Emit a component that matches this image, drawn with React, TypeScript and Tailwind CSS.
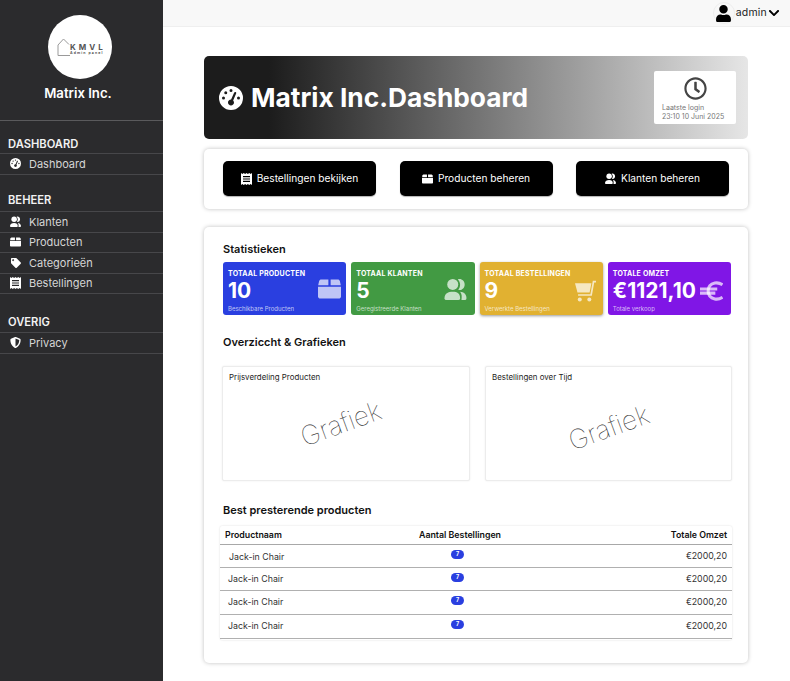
import React from "react";
import { FaTag, FaShieldAlt, FaRegClock, FaUser, FaChevronDown } from "react-icons/fa";
import { FaGaugeHigh } from "react-icons/fa6";

function BoxIcon({ className }: { className?: string }) {
  return (
    <svg viewBox="0 0 24 20" className={className} fill="currentColor">
      <path d="M3.4 0H10.8V6H0.2L1.2 1.6C1.5 .6 2.3 0 3.4 0Z" />
      <path d="M13.2 0H20.6C21.7 0 22.5 .6 22.8 1.6L23.8 6H13.2Z" />
      <path d="M0 7.6H24V17.5C24 18.9 22.9 20 21.5 20H2.5C1.1 20 0 18.9 0 17.5Z" />
    </svg>
  );
}

function PeopleIcon({ className }: { className?: string }) {
  return (
    <svg viewBox="0 0 24 24" className={className} fill="currentColor">
      <circle cx="9" cy="7" r="6" />
      <path d="M0 22C0 17 4 15 9 15C14 15 17 17 17 22Q17 24 15 24H2Q0 24 0 22Z" />
      <path d="M14.5 1.5C18 0 22 3 22 7C22 11 18.5 14 15 12.8C16.5 11 17 9 17 7C17 5 16 3 14.5 1.5Z" />
      <path d="M17 15C21 15 24 18 24 22Q24 24 22 24H18.5C19 20 19 17.5 17 15Z" />
    </svg>
  );
}

function ReceiptIcon({ className }: { className?: string }) {
  return (
    <svg viewBox="0 0 22 24" className={className} fill="currentColor" fillRule="evenodd">
      <path d="M0 0L2.75 2L5.5 0L8.25 2L11 0L13.75 2L16.5 0L19.25 2L22 0V24L19.25 22L16.5 24L13.75 22L11 24L8.25 22L5.5 24L2.75 22L0 24ZM4 6V8.5H18V6ZM4 10.8V13.2H18V10.8ZM4 15.5V18H18V15.5Z" />
    </svg>
  );
}

function EuroIcon({ className }: { className?: string }) {
  return (
    <svg viewBox="0 0 24 20" className={className} fill="none" stroke="currentColor" strokeWidth="3.2">
      <path d="M23.5 3.5C20.5 1.5 18 1.2 15.5 1.7C11 2.7 8.5 6 8.5 10C8.5 14 11 17.3 15.5 18.3C18 18.8 20.5 18.5 23.5 16.5" />
      <path d="M0 8H18M0 12.2H16" />
    </svg>
  );
}

function CartIcon({ className }: { className?: string }) {
  return (
    <svg viewBox="0 0 22 22" className={className} fill="currentColor">
      <path d="M0 3H17.2L15.3 12.5H2.6Z" />
      <path d="M22 1.1H19.4L16.9 15.2H3.2" fill="none" stroke="currentColor" strokeWidth="1.8" />
      <circle cx="5" cy="19.8" r="2.1" />
      <circle cx="15" cy="19.8" r="2.1" />
    </svg>
  );
}

function Logo() {
  return (
    <div className="flex h-16 w-16 items-center justify-center rounded-full bg-white">
      <div className="flex w-[46px] items-end">
        <svg viewBox="0 0 13 18" className="h-[18px] w-[13px] shrink-0" fill="none" stroke="#9a9a9a" strokeWidth="1">
          <path d="M1 17.5V7L6.5 1L12 6.5M1 17.5H13" />
        </svg>
        <div className="mb-[1px] flex flex-col leading-none text-[#555]">
          <span className="text-[8px] leading-[8px] font-bold tracking-[3px]">KMVL</span>
          <span className="text-[3.5px] leading-[4px] font-bold tracking-[1.1px]">Admin panel</span>
        </div>
      </div>
    </div>
  );
}

function SideItem({ icon, label }: { icon: React.ReactNode; label: string }) {
  return (
    <div className="flex h-[20.5px] items-center gap-2 border-b border-[#47474a] pl-[10px] text-[11px] text-[#d6d6d6]">
      <span className="flex w-[11px] justify-center text-white">{icon}</span>
      <span>{label}</span>
    </div>
  );
}

function SideHeading({ children, className }: { children: React.ReactNode; className?: string }) {
  return (
    <div className={`border-b border-[#47474a] pl-2 text-[11.2px] leading-[15px] font-semibold text-[#f2f2f2] ${className ?? ""}`}>
      {children}
    </div>
  );
}

function Sidebar() {
  return (
    <aside className="flex h-[681px] w-[163px] shrink-0 flex-col bg-[#2b2b2d]">
      <div className="flex h-[121px] flex-col items-center border-b border-[#5a5a5c] pt-[15px] pr-[3px]">
        <Logo />
        <div className="mt-[6px] mr-[4px] text-[13.2px] leading-4 font-semibold text-white">Matrix Inc.</div>
      </div>
      <SideHeading className="mt-[16px] pb-[1px]">DASHBOARD</SideHeading>
      <SideItem icon={<FaGaugeHigh size={11} />} label="Dashboard" />
      <SideHeading className="mt-[18px] pb-[3.5px]">BEHEER</SideHeading>
      <SideItem icon={<PeopleIcon className="h-[11px] w-[11px]" />} label="Klanten" />
      <SideItem icon={<BoxIcon className="h-[10px] w-[11px]" />} label="Producten" />
      <SideItem icon={<FaTag size={10} />} label="Categorieën" />
      <SideItem icon={<ReceiptIcon className="h-[12px] w-[11px]" />} label="Bestellingen" />
      <SideHeading className="mt-[21px] pb-[2px]">OVERIG</SideHeading>
      <SideItem icon={<FaShieldAlt size={11} />} label="Privacy" />
    </aside>
  );
}

function ActionButton({ icon, label }: { icon: React.ReactNode; label: string }) {
  return (
    <div className="flex h-[35px] w-[153px] items-center justify-center gap-[5px] rounded-[5px] bg-black text-[10.2px] text-white shadow-[0_1px_1px_rgba(0,0,0,0.3)]">
      {icon}
      <span>{label}</span>
    </div>
  );
}

function StatCard({
  bg,
  title,
  value,
  sub,
  icon,
  iconPos,
  extra,
}: {
  bg: string;
  title: string;
  value: string;
  sub: string;
  icon: React.ReactNode;
  iconPos: string;
  extra?: string;
}) {
  return (
    <div className={`relative h-[53px] flex-1 rounded-[3px] pt-[7px] pl-[5px] text-white ${bg} ${extra ?? ""}`}>
      <div className="text-[7px] leading-[9px] font-bold tracking-[0.2px]">{title}</div>
      <div className="text-[21px] leading-[26px] font-bold">{value}</div>
      <div className="pt-[1px] text-[6px] leading-[8px] text-white/70">{sub}</div>
      <div className={`absolute text-white/70 ${iconPos}`}>{icon}</div>
    </div>
  );
}

function ChartCard({ title, width, labelClass }: { title: string; width: string; labelClass: string }) {
  return (
    <div className={`relative h-[115px] rounded-[2px] border border-[#ececec] bg-white shadow-[0_0_2px_rgba(0,0,0,0.08)] ${width}`}>
      <div className="pt-[4px] pl-[6px] text-[7.9px] leading-3 text-[#1c1c1c]">{title}</div>
      <div className={`absolute inset-0 flex items-center justify-center ${labelClass}`}>
        <span className="-rotate-[20deg] text-[26.5px] leading-none font-thin text-[#333]">Grafiek</span>
      </div>
    </div>
  );
}

function Row({ h, name, cell }: { h: string; name: string; cell: string }) {
  return (
    <div className={`grid grid-cols-[160px_160px_1fr] items-center border-b border-[#b0b0b0] text-[8.8px] text-[#333] ${h}`}>
      <span className={name}>Jack-in Chair</span>
      <span className="flex justify-center pr-[5px] pb-[4px]">
        <span className="flex h-[9px] w-[13px] items-center justify-center rounded-full bg-[#2a3fe0] text-[5.5px] font-bold text-white">7</span>
      </span>
      <span className={`pr-[5px] text-right ${cell}`}>€2000,20</span>
    </div>
  );
}

export default function App() {
  return (
    <div className="flex h-[681px] w-[790px] overflow-hidden bg-white font-['Inter',sans-serif]">
      <Sidebar />
      <div className="flex min-w-0 flex-1 flex-col">
        <header className="flex h-[27px] items-center justify-end border-b border-[#efefef] bg-[#f8f8f8] pr-[10px]">
          <span className="flex h-[22px] w-[22px] items-center justify-center rounded-full border border-[#eeeeee]">
            <FaUser size={17} className="text-black" />
          </span>
          <span className="ml-[1px] text-[10.5px] tracking-[0.2px] text-[#222]">admin</span>
          <FaChevronDown size={12} className="ml-[1px] text-black" />
        </header>

        <main className="ml-[41px] w-[544px] pt-[29px]">
          <section className="flex h-[83px] items-center justify-between rounded-[5px] bg-[linear-gradient(90deg,#1c1c1c_0%,#1c1c1c_12%,#e6e6e6_100%)] pr-[12px] pl-[15px]">
            <div className="flex items-center gap-[8px] text-white">
              <FaGaugeHigh size={24} />
              <h1 className="text-[26.3px] leading-8 font-bold">Matrix Inc.Dashboard</h1>
            </div>
            <div className="flex h-[53px] w-[82px] flex-col items-center rounded-[2px] bg-white pt-[6px]">
              <FaRegClock size={23} className="text-[#444]" />
              <div className="mt-[3px] w-full pl-[8px] text-[7px] leading-[9px] text-[#777]">
                Laatste login
                <br />
                23:10 10 Juni 2025
              </div>
            </div>
          </section>

          <section className="mt-[10px] flex h-[60px] items-center justify-between rounded-[5px] bg-white pr-[19px] pb-[1px] pl-[19px] shadow-[0_0_4px_rgba(0,0,0,0.25)]">
            <ActionButton icon={<ReceiptIcon className="h-[12px] w-[11px]" />} label="Bestellingen bekijken" />
            <ActionButton icon={<BoxIcon className="h-[10px] w-[11px]" />} label="Producten beheren" />
            <ActionButton icon={<PeopleIcon className="h-[11px] w-[11px]" />} label="Klanten beheren" />
          </section>

          <section className="mt-[18px] h-[436px] rounded-[5px] bg-white px-[16px] pt-[15px] pb-[10px] shadow-[0_0_4px_rgba(0,0,0,0.25)]">
            <h2 className="pl-[3px] text-[11px] leading-[14px] font-semibold text-[#111]">Statistieken</h2>
            <div className="mt-[6px] flex gap-[5px] pr-[1px] pl-[3px]">
              <StatCard bg="bg-[#2a3fe0]" title="TOTAAL PRODUCTEN" value="10" sub="Beschikbare Producten" iconPos="top-[17px] right-[5px]" icon={<BoxIcon className="h-[20px] w-[23px]" />} />
              <StatCard bg="bg-[#429a43]" title="TOTAAL KLANTEN" value="5" sub="Geregistreerde Klanten" iconPos="top-[16px] right-[8px]" icon={<PeopleIcon className="h-[22px] w-[23px]" />} />
              <StatCard bg="bg-[#e1b131]" title="TOTAAL BESTELLINGEN" value="9" sub="Verwerkte Bestellingen" iconPos="top-[18px] right-[7px]" icon={<CartIcon className="h-[22px] w-[21px]" />} extra="shadow-[0_1px_3px_rgba(0,0,0,0.4)]" />
              <StatCard bg="bg-[#8016e6]" title="TOTALE OMZET" value="€1121,10" sub="Totale verkoop" iconPos="top-[19px] right-[8px]" icon={<EuroIcon className="h-[20px] w-[23px]" />} />
            </div>

            <h2 className="mt-[20px] pl-[3px] text-[11px] leading-[14px] font-semibold text-[#111]">Overziccht &amp; Grafieken</h2>
            <div className="mt-[17px] flex justify-between pl-[2px]">
              <ChartCard title="Prijsverdeling Producten" width="w-[248px]" labelClass="pr-[11px]" />
              <ChartCard title="Bestellingen over Tijd" width="w-[247px]" labelClass="pt-[7px]" />
            </div>

            <h2 className="mt-[22px] pl-[3px] text-[11px] leading-[14px] font-semibold text-[#111]">Best presterende producten</h2>
            <div className="mt-[9px] h-[114px] rounded-[2px] bg-white shadow-[0_0_2px_rgba(0,0,0,0.15)]">
              <div className="grid h-[19px] grid-cols-[160px_160px_1fr] items-center border-b border-[#a8a8a8] text-[8.8px] font-semibold text-[#111]">
                <span className="pl-[5px]">Productnaam</span>
                <span className="text-center">Aantal Bestellingen</span>
                <span className="pr-[5px] text-right">Totale Omzet</span>
              </div>
              <Row h="h-[23px]" name="pt-[1px] pl-[9px]" cell="" />
              <Row h="h-[23px]" name="pl-[8px]" cell="" />
              <Row h="h-[24px]" name="pb-[2px] pl-[8px]" cell="pb-[2px]" />
              <Row h="h-[24px]" name="pb-[1px] pl-[8px]" cell="pb-[1px]" />
            </div>
          </section>
        </main>
      </div>
    </div>
  );
}
